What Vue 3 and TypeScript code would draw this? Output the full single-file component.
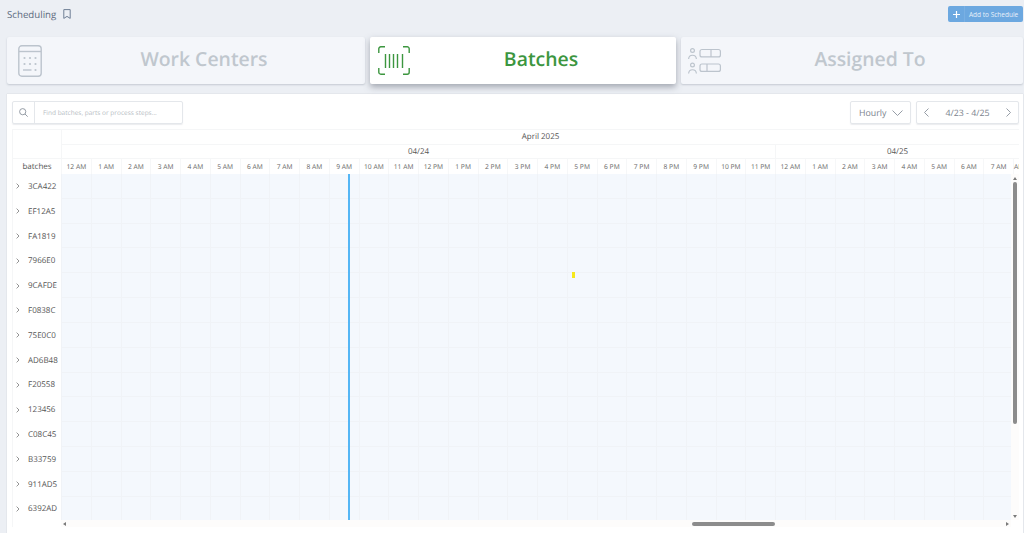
<template>
  <div class="page">
    <header class="topbar">
      <div class="title">
        <span>Scheduling</span>
        <svg class="bookmark" width="8" height="10" viewBox="0 0 8 10" fill="none" stroke="#6f7f95" stroke-width="1">
          <path d="M.8.600h6.400v8.800L4 7.400.8 9.400z" />
        </svg>
      </div>
      <button class="add-btn">
        <span class="add-plus">
          <svg width="7" height="7" viewBox="0 0 7 7" stroke="#fff" stroke-width="1.2"><path d="M3.500 0v7M0 3.500h7" /></svg>
        </span>
        <span class="add-label">Add to Schedule</span>
      </button>
    </header>

    <nav class="tabs">
      <div class="tab work">
        <svg class="tab-icon" width="24" height="32" viewBox="0 0 24 32" fill="none" stroke="#bcc4cd" stroke-width="1.4">
          <rect x=".8" y=".8" width="22.400" height="30.400" rx="3" />
          <path d="M1 6.500h22" />
          <g fill="#bcc4cd" stroke="none">
            <circle cx="6.500" cy="13" r="1.100" /><circle cx="12" cy="13" r="1.100" /><circle cx="17.500" cy="13" r="1.100" />
            <circle cx="6.500" cy="19" r="1.100" /><circle cx="12" cy="19" r="1.100" /><circle cx="17.500" cy="19" r="1.100" />
            <circle cx="17.500" cy="25" r="1.100" />
          </g>
          <path d="M5 25h8.500" />
        </svg>
        <span>Work Centers</span>
      </div>
      <div class="tab batches active">
        <svg class="tab-icon" width="32" height="29" viewBox="0 0 32 29" fill="none" stroke="#3c963f" stroke-width="1.400">
          <path d="M7 .8H2.800a2 2 0 0 0-2 2V7M25 .8h4.200a2 2 0 0 1 2 2V7M7 28.200H2.800a2 2 0 0 1-2-2V22M25 28.200h4.200a2 2 0 0 0 2-2V22" />
          <path d="M7.500 8v14M11.500 8v14M15.500 8v14M19.500 8v14M24.500 8v14" />
        </svg>
        <span>Batches</span>
      </div>
      <div class="tab assigned">
        <svg class="tab-icon" width="33" height="26" viewBox="0 0 33 26" fill="none" stroke="#bcc4cd" stroke-width="1.200">
          <circle cx="4.500" cy="2.500" r="1.900" /><path d="M.6 11c.4-5 7.400-5 7.800 0" />
          <rect x="12" y="1.500" width="20.400" height="7.400" rx="2" /><path d="M23 1.500v7.400" />
          <circle cx="4.500" cy="17" r="1.900" /><path d="M.6 25.500c.4-5 7.400-5 7.800 0" />
          <rect x="12" y="16" width="20.400" height="7.400" rx="2" /><path d="M19 16v7.400" />
        </svg>
        <span>Assigned To</span>
      </div>
    </nav>

    <main class="panel">
      <div class="toolbar">
        <div class="search">
          <span class="search-icon">
            <svg width="9" height="9" viewBox="0 0 9 9" fill="none" stroke="#8a929c" stroke-width=".9"><circle cx="3.700" cy="3.700" r="3.100" /><path d="M6 6 8.700 8.700" /></svg>
          </span>
          <span class="search-text">Find batches, parts or process steps...</span>
        </div>
        <div class="controls">
          <div class="ctl hourly">
            <span>Hourly</span>
            <svg width="11" height="6" viewBox="0 0 11 6" fill="none" stroke="#8a929c" stroke-width=".9"><path d="M.5.500l5 5 5-5" /></svg>
          </div>
          <div class="ctl range">
            <svg width="5" height="9" viewBox="0 0 5 9" fill="none" stroke="#8a929c" stroke-width=".9"><path d="M4.500.500l-4 4 4 4" /></svg>
            <span>4/23 - 4/25</span>
            <svg width="5" height="9" viewBox="0 0 5 9" fill="none" stroke="#8a929c" stroke-width=".9"><path d="M.5.500l4 4-4 4" /></svg>
          </div>
        </div>
      </div>

      <div class="gantt">
        <div class="side">
          <div class="side-blank"></div>
          <div class="side-head">batches</div>
          <div v-for="b in batches" :key="b" class="side-row">
            <svg width="4" height="6" viewBox="0 0 4 6" fill="none" stroke="#888" stroke-width=".9"><path d="M.6.600l2.400 2.400-2.400 2.400" /></svg>
            <span>{{ b }}</span>
          </div>
        </div>

        <div class="chart">
          <div class="month">April 2025</div>
          <div class="days">
            <div class="day day-a">04/24</div>
            <div class="day day-b">04/25</div>
          </div>
          <div class="hours">
            <div v-for="(h, i) in hours" :key="i" class="hour">{{ h }}</div>
            <div class="hour hour-cut">AM</div>
          </div>
          <div class="body-wrap">
            <div class="grid">
              <div v-for="b in batches" :key="b" class="grid-row">
                <div v-for="(h, i) in hours" :key="i" class="grid-cell"></div>
              </div>
              <div class="now-line"></div>
              <div class="marker"></div>
            </div>
            <div class="vscroll">
              <span class="arrow up"></span>
              <span class="vthumb"></span>
              <span class="arrow down"></span>
            </div>
          </div>
          <div class="hscroll">
            <span class="arrow left"></span>
            <span class="hthumb"></span>
            <span class="arrow right"></span>
          </div>
        </div>
      </div>
    </main>
  </div>
</template>

<script setup lang="ts">
const batches: string[] = [
  '3CA422', 'EF12A5', 'FA1819', '7966E0', '9CAFDE', 'F0838C', '75E0C0',
  'AD6B48', 'F20558', '123456', 'C08C45', 'B33759', '911AD5', '6392AD',
]

const labels = ['12', '1', '2', '3', '4', '5', '6', '7', '8', '9', '10', '11']
const day = [...labels.map((l) => `${l} AM`), ...labels.map((l) => `${l} PM`)]
const hours: string[] = [...day, ...day.slice(0, 8)]
</script>

<style>
html,
body {
  margin: 0;
  background: #eceff4;
  overflow: hidden;
}
</style>

<style scoped>
.page {
  width: 1024px;
  height: 533px;
  overflow: hidden;
  background: #eceff4;
  font-family: "Open Sans", "Noto Sans", sans-serif;
  text-rendering: geometricPrecision;
  box-sizing: border-box;
  padding: 6px 1px 0 7px;
}

.topbar {
  display: flex;
  justify-content: space-between;
  align-items: flex-start;
  height: 31px;
}

.title {
  display: flex;
  align-items: center;
  gap: 7px;
  height: 16px;
  font-size: 9.700px;
  color: #5d6b80;
}

.add-btn {
  display: flex;
  align-items: center;
  width: 75px;
  height: 16px;
  padding: 0;
  border: none;
  border-radius: 2px;
  background: #6ca8e0;
  color: #e8f1fa;
  font-family: inherit;
  font-size: 6.500px;
}

.add-plus {
  display: flex;
  align-items: center;
  justify-content: center;
  width: 16px;
  height: 16px;
  border-right: 1px solid #79b0e3;
}

.add-label {
  margin-left: 4px;
  white-space: nowrap;
}

.tabs {
  display: flex;
  gap: 5px;
  height: 47px;
}

.tab {
  position: relative;
  display: flex;
  align-items: center;
  justify-content: center;
  box-sizing: border-box;
  height: 47px;
  padding: 0 0 5px 36px;
  background: #f4f6fa;
  border-radius: 2px;
  box-shadow: 0 1px 2px rgba(120, 130, 145, 0.35);
  color: #c0c7ce;
  font-size: 19.400px;
  font-weight: 600;
}

.tab.work {
  width: 358px;
}

.tab.batches {
  width: 306px;
}

.tab.assigned {
  flex: 1;
}

.tab.active {
  background: #fff;
  color: #3c963f;
  box-shadow: 0 3px 6px rgba(90, 95, 110, 0.5);
}

.tab-icon {
  position: absolute;
  left: 11px;
  top: 8px;
}

.batches .tab-icon {
  left: 8px;
  top: 9px;
}

.assigned .tab-icon {
  left: 7px;
  top: 11px;
}

.panel {
  margin-top: 10px;
  height: 439px;
  box-sizing: border-box;
  padding: 7px 4px 0 5px;
  background: #fff;
  box-shadow: 0 0 1px rgba(120, 130, 145, 0.4);
}

.toolbar {
  display: flex;
  justify-content: space-between;
  height: 23px;
  margin-bottom: 5px;
}

.search {
  display: flex;
  width: 171px;
  height: 23px;
  box-sizing: border-box;
  border: 1px solid #e4e7eb;
  border-radius: 2px;
  box-shadow: 0 1px 1px rgba(120, 130, 145, 0.15);
}

.search-icon {
  display: flex;
  align-items: center;
  justify-content: center;
  width: 21px;
  border-right: 1px solid #e4e7eb;
}

.search-text {
  margin-left: 8px;
  line-height: 21px;
  font-size: 6.500px;
  color: #b7bdc4;
}

.controls {
  display: flex;
  gap: 5px;
}

.ctl {
  display: flex;
  align-items: center;
  box-sizing: border-box;
  height: 23px;
  border: 1px solid #e4e7eb;
  border-radius: 2px;
  box-shadow: 0 1px 1px rgba(120, 130, 145, 0.15);
  font-size: 8.800px;
  color: #7b838e;
}

.hourly {
  width: 61px;
  padding: 0 7px 0 8px;
  justify-content: space-between;
}

.range {
  width: 103px;
  padding: 0 7px;
  justify-content: space-between;
}

.gantt {
  display: flex;
  height: 398px;
  color: #555;
}

.side {
  width: 49px;
  flex: none;
  box-sizing: border-box;
  border-left: 1px solid #f5f6f7;
}

.side-blank {
  height: 29px;
  border-top: 1px solid #f5f6f7;
  box-sizing: border-box;
}

.side-head {
  height: 16px;
  line-height: 15px;
  border-top: 1px solid #f5f6f7;
  box-sizing: border-box;
  text-align: center;
  font-size: 8px;
  color: #555;
}

.side-row {
  display: flex;
  align-items: center;
  height: 24.820px;
  box-sizing: border-box;
  padding-left: 3px;
  gap: 8px;
  font-size: 8px;
  color: #555;
}

.chart {
  position: relative;
  flex: none;
  width: 958px;
  overflow: hidden;
}

.month {
  height: 15px;
  line-height: 14px;
  box-sizing: border-box;
  border-top: 1px solid #f5f6f7;
  border-left: 1px solid #f5f6f7;
  text-align: center;
  font-size: 8px;
  color: #555;
}

.days {
  display: flex;
  height: 14px;
  border-top: 1px solid #f5f6f7;
  box-sizing: border-box;
}

.day {
  line-height: 13px;
  text-align: center;
  font-size: 8px;
  color: #555;
  box-sizing: border-box;
  border-left: 1px solid #f5f6f7;
}

.day-a {
  width: 714px;
}

.day-b {
  width: 244px;
}

.hours {
  display: flex;
  height: 16px;
  border-top: 1px solid #f5f6f7;
  box-sizing: border-box;
}

.hour {
  flex: none;
  width: 29.750px;
  box-sizing: border-box;
  border-left: 1px solid #f6f7f8;
  line-height: 15px;
  text-align: center;
  font-size: 6.700px;
  color: #666;
  white-space: nowrap;
}

.hour-cut {
  text-align: left;
}

.body-wrap {
  display: flex;
  height: 346px;
}

.grid {
  position: relative;
  flex: none;
  width: 950px;
  height: 346px;
  overflow: hidden;
  background: #f4f8fd;
}

.grid-row {
  display: flex;
  height: 24.820px;
  box-sizing: border-box;
  border-bottom: 1px solid #f0f3f7;
}

.grid-cell {
  flex: none;
  width: 29.750px;
  box-sizing: border-box;
  border-left: 1px solid #f0f3f7;
}

.now-line {
  position: absolute;
  left: 287px;
  top: 0;
  bottom: 0;
  width: 1.500px;
  background: #54b6f5;
}

.marker {
  position: absolute;
  left: 511px;
  top: 98px;
  width: 3px;
  height: 6px;
  background: #f6e81c;
}

.vscroll {
  flex: 1;
  display: flex;
  flex-direction: column;
  align-items: center;
  padding: 3px 0 2px;
  box-sizing: border-box;
  background: #fdfcfb;
}

.vthumb {
  width: 4px;
  height: 242px;
  margin-top: 2px;
  border-radius: 2px;
  background: #8c8c8c;
}

.hscroll {
  display: flex;
  align-items: center;
  height: 7px;
  width: 950px;
  padding: 0 2px;
  box-sizing: border-box;
  background: #fdfcfb;
}

.hthumb {
  width: 83px;
  height: 4px;
  margin-left: 626px;
  margin-right: auto;
  border-radius: 2px;
  background: #8c8c8c;
}

.arrow {
  display: block;
  width: 0;
  height: 0;
  flex: none;
}

.arrow.up {
  border: 2.500px solid transparent;
  border-top: 0;
  border-bottom: 3px solid #7a7a7a;
}

.arrow.down {
  margin-top: auto;
  border: 2.500px solid transparent;
  border-bottom: 0;
  border-top: 3px solid #7a7a7a;
}

.arrow.left {
  border: 2.500px solid transparent;
  border-left: 0;
  border-right: 3px solid #7a7a7a;
}

.arrow.right {
  border: 2.500px solid transparent;
  border-right: 0;
  border-left: 3px solid #7a7a7a;
}
</style>
